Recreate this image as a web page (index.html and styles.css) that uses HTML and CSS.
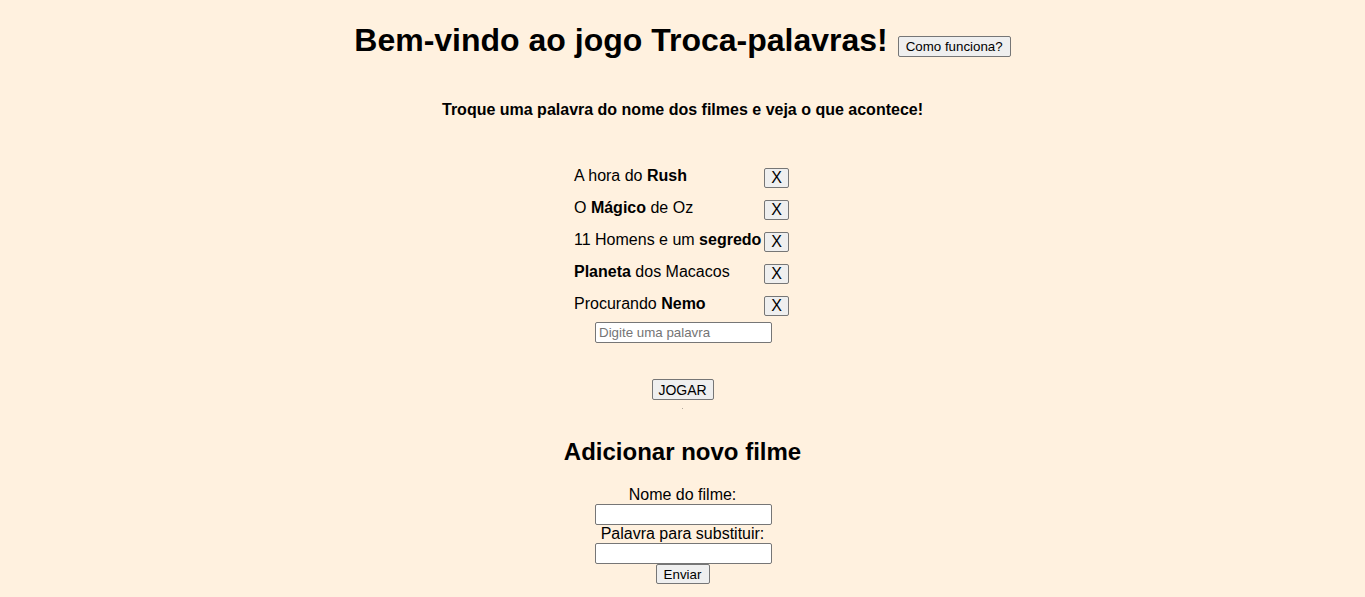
FILE: index.html
```html
<!DOCTYPE html>
<html lang="pt">
<head>
<meta charset="utf-8">
<title>Troca-palavras</title>
<link rel="stylesheet" href="styles.css">
</head>
<body>
<header class="header">
  <h1 class="title">Bem-vindo ao jogo Troca-palavras! <button class="btn btn-help" type="button">Como funciona?</button></h1>
  <h4 class="subtitle">Troque uma palavra do nome dos filmes e veja o que acontece!</h4>
</header>

<main class="game">
  <table class="movies">
    <tr><td class="movie">A hora do <b>Rush</b></td><td class="action"><button class="btn btn-x" type="button">X</button></td></tr>
    <tr><td class="movie">O <b>Mágico</b> de Oz</td><td class="action"><button class="btn btn-x" type="button">X</button></td></tr>
    <tr><td class="movie">11 Homens e um <b>segredo</b></td><td class="action"><button class="btn btn-x" type="button">X</button></td></tr>
    <tr><td class="movie"><b>Planeta</b> dos Macacos</td><td class="action"><button class="btn btn-x" type="button">X</button></td></tr>
    <tr><td class="movie">Procurando <b>Nemo</b></td><td class="action"><button class="btn btn-x" type="button">X</button></td></tr>
  </table>
  <input class="field field-word" type="text" placeholder="Digite uma palavra">
  <button class="btn btn-play" type="button">JOGAR</button>
  <span class="dot"></span>
</main>

<section class="add">
  <h2 class="add-title">Adicionar novo filme</h2>
  <form class="add-form">
    <label class="label" for="nome">Nome do filme:</label>
    <input class="field" id="nome" type="text">
    <label class="label" for="palavra">Palavra para substituir:</label>
    <input class="field" id="palavra" type="text">
    <button class="btn btn-send" type="button">Enviar</button>
  </form>
</section>
</body>
</html>
```

FILE: styles.css
```css
html, body {
  margin: 0;
  padding: 0;
}
body {
  background: #fff1df;
  font-family: "Liberation Sans", Arial, sans-serif;
  color: #000;
  text-align: center;
}
.header {
  padding-top: 22px;
}
.title {
  margin: 0;
  font-size: 32px;
  line-height: 37px;
  font-weight: bold;
}
.btn {
  font-family: "Liberation Sans", Arial, sans-serif;
  font-size: 13.333px;
  color: #000;
  background: #efefef;
  border: 1px solid #767676;
  border-radius: 2px;
  padding: 1px 6px;
  line-height: normal;
}
.btn-help {
  vertical-align: baseline;
  padding: 2px 7px;
  margin-left: 1px;
}
.subtitle {
  margin: 42px 0 0;
  font-size: 16px;
  line-height: 18px;
  font-weight: bold;
}
.game {
  display: flex;
  flex-direction: column;
  align-items: center;
  margin-top: 48px;
}
.movies {
  border-collapse: separate;
  border-spacing: 0;
}
.movies td {
  padding: 0;
  height: 32px;
  vertical-align: top;
}
.movie {
  text-align: left;
  font-size: 16px;
  line-height: 18px;
  width: 190px;
}
.movies .action {
  width: 27px;
}
.btn-x {
  font-size: 16px;
  line-height: 16px;
  padding: 1px 6px;
  width: 25px;
  height: 20px;
  margin-top: 1px;
  display: block;
}
.field {
  font-family: "Liberation Sans", Arial, sans-serif;
  font-size: 13.333px;
  width: 177px;
  height: 21px;
  box-sizing: border-box;
  border: 1px solid #767676;
  border-radius: 2px;
  padding: 1px 3px;
  background: #fff;
  color: #000;
  margin-left: 2px;
}
.field::placeholder {
  color: #757575;
}
.game .field-word {
  margin-top: -5px;
}
.btn-play {
  font-size: 14px;
  margin-top: 36px;
  height: 21px;
  width: 62px;
  padding: 0;
}
.dot {
  display: block;
  width: 1px;
  height: 1px;
  background: #b0a89c;
  margin-top: 8px;
}
.add-title {
  margin: 29px 0 0;
  font-size: 24px;
  line-height: 28px;
  font-weight: bold;
}
.add-form {
  display: flex;
  flex-direction: column;
  align-items: center;
  margin-top: 20px;
}
.label {
  font-size: 16px;
  line-height: 18px;
}
.btn-send {
  font-size: 13.333px;
  width: 54px;
  height: 20px;
  padding: 0;
  margin-top: 0;
}
```
